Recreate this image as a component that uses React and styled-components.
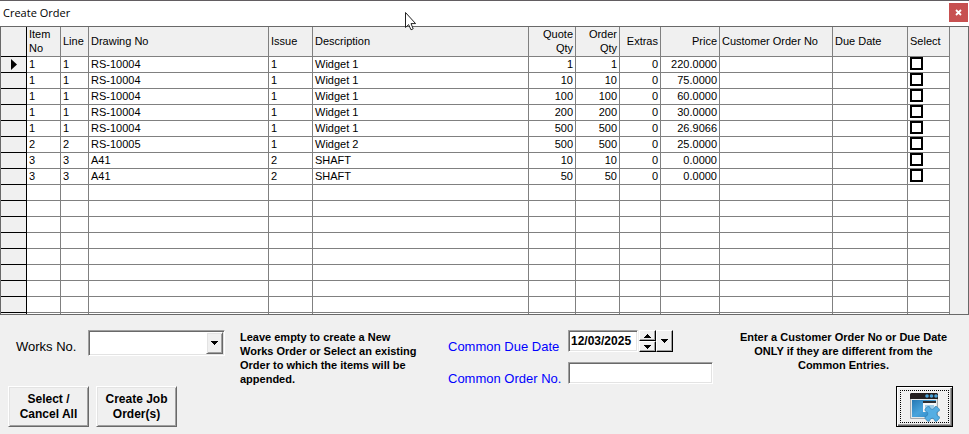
import React, { useState } from 'react';
import styled, { createGlobalStyle } from 'styled-components';

const GlobalStyle = createGlobalStyle`
  * {
    box-sizing: border-box;
  }
  body {
    margin: 0;
    background: #f0f0f0;
    color: #000;
    font-family: 'Liberation Sans', Arial, sans-serif;
    font-size: 11px;
  }
  button, input, select {
    margin: 0;
    padding: 0;
    color: inherit;
    font-family: inherit;
    border-radius: 0;
    outline: none;
  }
`;

const columns = [
  { key: 'item', label: 'Item No', width: 34 },
  { key: 'line', label: 'Line', width: 28 },
  { key: 'drawing', label: 'Drawing No', width: 180 },
  { key: 'issue', label: 'Issue', width: 44 },
  { key: 'description', label: 'Description' },
  { key: 'quoteQty', label: 'Quote Qty', width: 47, right: true },
  { key: 'orderQty', label: 'Order Qty', width: 44, right: true },
  { key: 'extras', label: 'Extras', width: 41, right: true },
  { key: 'price', label: 'Price', width: 59, right: true },
  { key: 'customerOrder', label: 'Customer Order No', width: 113 },
  { key: 'dueDate', label: 'Due Date', width: 75 },
];

const makeRow = (item, line, drawing, issue, description, qty, price) => ({
  item, line, drawing, issue, description, quoteQty: qty, orderQty: qty, extras: 0, price,
});

const orderRows = [
  makeRow(1, 1, 'RS-10004', 1, 'Widget 1', 1, '220.0000'),
  makeRow(1, 1, 'RS-10004', 1, 'Widget 1', 10, '75.0000'),
  makeRow(1, 1, 'RS-10004', 1, 'Widget 1', 100, '60.0000'),
  makeRow(1, 1, 'RS-10004', 1, 'Widget 1', 200, '30.0000'),
  makeRow(1, 1, 'RS-10004', 1, 'Widget 1', 500, '26.9066'),
  makeRow(2, 2, 'RS-10005', 1, 'Widget 2', 500, '25.0000'),
  makeRow(3, 3, 'A41', 2, 'SHAFT', 10, '0.0000'),
  makeRow(3, 3, 'A41', 2, 'SHAFT', 50, '0.0000'),
];

const emptyRows = Array.from({ length: 8 }, (_, i) => i);

const App = () => {
  const [selected, setSelected] = useState(orderRows.map(() => false));
  const [dueDate, setDueDate] = useState('12/03/2025');
  const [orderNo, setOrderNo] = useState('');

  const toggle = (index) => setSelected(selected.map((s, i) => (i === index ? !s : s)));
  const toggleAll = () => {
    const all = selected.every(Boolean);
    setSelected(selected.map(() => !all));
  };

  return (
    <Window>
      <GlobalStyle />
      <TitleBar>
        <Title>Create Order</Title>
        <CloseButton type="button" aria-label="Close">
          <svg width="7" height="7" viewBox="0 0 7 7">
            <path d="M1 1 L6 6 M6 1 L1 6" stroke="#fff" strokeWidth="1.8" />
          </svg>
        </CloseButton>
      </TitleBar>

      <GridFrame>
        <Table>
          <colgroup>
            <Col $width={26} />
            {columns.map((c) => <Col key={c.key} $width={c.width} />)}
            <Col $width={42} />
          </colgroup>
          <thead>
            <tr>
              <Marker as="th" />
              {columns.map((c) => (
                <HeadCell key={c.key} $right={c.right}>{c.label}</HeadCell>
              ))}
              <HeadCell>Select</HeadCell>
            </tr>
          </thead>
          <tbody>
            {orderRows.map((row, i) => (
              <tr key={i}>
                <Marker>
                  {i === 0 && (
                    <svg width="6" height="11" viewBox="0 0 6 11">
                      <path d="M0 0 L6 5.5 L0 11 Z" />
                    </svg>
                  )}
                </Marker>
                {columns.map((c) => (
                  <Cell key={c.key} $right={c.right}>{row[c.key]}</Cell>
                ))}
                <CheckCell>
                  <Check
                    type="checkbox"
                    aria-label={`Select row ${i + 1}`}
                    checked={selected[i]}
                    onChange={() => toggle(i)}
                  />
                </CheckCell>
              </tr>
            ))}
            {emptyRows.map((i) => (
              <tr key={i}>
                <Marker />
                {columns.map((c) => <Cell key={c.key} />)}
                <Cell />
              </tr>
            ))}
            <tr>
              <Marker $stub />
              {columns.map((c) => <Cell key={c.key} $stub />)}
              <Cell $stub />
            </tr>
          </tbody>
        </Table>
      </GridFrame>

      <Footer>
        <Stack>
          <Field $label={80} $indent>
            <Label htmlFor="works">Works No.</Label>
            <SelectBox>
              <Select id="works"><option value="" /></Select>
              <SelectArrow><Arrow /></SelectArrow>
            </SelectBox>
          </Field>
          <Buttons>
            <ActionButton type="button" onClick={toggleAll}>Select /<br />Cancel All</ActionButton>
            <ActionButton type="button">Create Job<br />Order(s)</ActionButton>
          </Buttons>
        </Stack>

        <Hint>
          Leave empty to create a New<br />
          Works Order or Select an existing<br />
          Order to which the items will be<br />
          appended.
        </Hint>

        <Form>
          <Field $label={120} $blue>
            <Label htmlFor="due">Common Due Date</Label>
            <DateBox>
              <DateInput id="due" value={dueDate} onChange={(e) => setDueDate(e.target.value)} />
              <Spinner>
                <SmallButton type="button" aria-label="Next day"><Arrow up /></SmallButton>
                <SmallButton type="button" aria-label="Previous day"><Arrow /></SmallButton>
              </Spinner>
              <SmallButton type="button" aria-label="Open calendar"><Arrow /></SmallButton>
            </DateBox>
          </Field>
          <Field $label={120} $blue>
            <Label htmlFor="order">Common Order No.</Label>
            <TextInput id="order" value={orderNo} onChange={(e) => setOrderNo(e.target.value)} />
          </Field>
        </Form>

        <Stack>
          <Hint $center>
            Enter a Customer Order No or Due Date<br />
            ONLY if they are different from the<br />
            Common Entries.
          </Hint>
          <ExitButton type="button" aria-label="Close form">
            <Dotted><ExitIcon /></Dotted>
          </ExitButton>
        </Stack>
      </Footer>

      <Pointer width="13" height="20" viewBox="0 0 13 20">
        <path
          d="M1.5 1.5 V16.5 L4.6 13.6 L7 18.8 L9.2 17.8 L7 12.6 H11.6 Z"
          fill="#fff"
          stroke="#222"
        />
      </Pointer>
    </Window>
  );
};

const Arrow = ({ up }) => (
  <svg width="7" height="4" viewBox="0 0 7 4" shapeRendering="crispEdges">
    <path d={up ? 'M0 4 L3.5 0 L7 4 Z' : 'M0 0 L3.5 4 L7 0 Z'} />
  </svg>
);

const ExitIcon = () => (
  <svg width="31" height="30" viewBox="0 0 31 30">
    <defs>
      <linearGradient id="pane" x1="0" y1="0" x2="1" y2="1">
        <stop offset="0" stopColor="#2478b4" />
        <stop offset="0.5" stopColor="#49a4dc" />
        <stop offset="1" stopColor="#2b86c4" />
      </linearGradient>
    </defs>
    <path d="M1.5 5 H28.5 V26.5 H1.5 Z" fill="#e4e8ea" stroke="#a4a9ac" />
    <path d="M3 8 H27 V25 H3 Z" fill="url(#pane)" />
    <path d="M2 1 H28 L29 2 V7 H1 V2 Z" fill="#231f20" />
    <g fill="#4aa3d8">
      <circle cx="18" cy="4" r="1.8" />
      <circle cx="22.5" cy="4" r="1.8" />
      <circle cx="27" cy="4" r="1.8" />
    </g>
    <path d="M14 10 H27 V20 H14 Z" fill="#f4f6f7" />
    <path d="M14 9 H27 V11 H14 Z" fill="#2a2e33" />
    <path d="M16 13 H25 V18 H16 Z" fill="#9ccbe8" />
    <path
      d="M18.6 14.6 H20.4 Q21 17.4 23.2 17.4 Q25.4 17.4 26 14.6 H27.8 L30.4 17.2 V18.8 Q27.6 19.6 27.6 21.8 Q27.6 24 30.4 24.8 V26.4 L27.8 29.2 H26 Q25.4 26.2 23.2 26.2 Q21 26.2 20.4 29.2 H18.6 L16 26.4 V24.8 Q18.8 24 18.8 21.8 Q18.8 19.6 16 18.8 V17.2 Z"
      fill="#55aee3"
      stroke="#2f7fb3"
      strokeWidth="0.7"
      strokeLinejoin="round"
    />
  </svg>
);

const sunken = `
  border: 1px solid;
  border-color: #a0a0a0 #fff #fff #a0a0a0;
  box-shadow: inset 1px 1px #696969, inset -1px -1px #e3e3e3;
  background: #fff;
`;

const raised = `
  border: 1px solid;
  border-color: #fff #696969 #696969 #fff;
  box-shadow: inset 1px 1px #e3e3e3, inset -1px -1px #a0a0a0;
  background: #f0f0f0;
`;

const Window = styled.main`
  position: relative;
  border-top: 1px solid #625d61;
`;

const TitleBar = styled.header`
  display: flex;
  justify-content: space-between;
  height: 25px;
  padding: 2px 1px 0 3px;
  background: #fff;
`;

const Title = styled.h1`
  margin: 0;
  font-family: 'Open Sans', 'Noto Sans', sans-serif;
  font-size: 11px;
  font-weight: 400;
  line-height: 20px;
`;

const CloseButton = styled.button`
  display: flex;
  align-items: center;
  justify-content: center;
  width: 19px;
  height: 19px;
  border: 0;
  background: #c75050;
`;

const GridFrame = styled.section`
  padding-right: 18px;
  border: 1px solid #696969;
`;

const Table = styled.table`
  width: 100%;
  table-layout: fixed;
  border-collapse: separate;
  border-spacing: 0;
`;

const Col = styled.col`
  width: ${(props) => (props.$width ? `${props.$width}px` : 'auto')};
`;

const Cell = styled.td`
  height: ${(props) => (props.$stub ? '1px' : '16px')};
  padding: 0 2px;
  border-right: 1px solid #808080;
  border-bottom: ${(props) => (props.$stub ? '0' : '1px solid #808080')};
  background: #fff;
  line-height: 15px;
  text-align: ${(props) => (props.$right ? 'right' : 'left')};
  white-space: nowrap;
`;

const HeadCell = styled(Cell).attrs({ as: 'th' })`
  height: 30px;
  padding-bottom: 1px;
  background: #f0f0f0;
  font-weight: 400;
  line-height: 14px;
  white-space: normal;
`;

const Marker = styled(Cell)`
  padding: 0 0 0 10px;
  border-color: #000;
  background: #f0f0f0;

  svg {
    display: block;
  }
`;

const CheckCell = styled(Cell)`
  vertical-align: top;
`;

const Check = styled.input`
  display: block;
  appearance: none;
  width: 13px;
  height: 13px;
  border: 2px solid #000;
  background: #fff;

  &:checked {
    background: #000;
    box-shadow: inset 0 0 0 2px #fff;
  }
`;

const Footer = styled.footer`
  display: grid;
  grid-template-columns: 217px 192px 272px minmax(217px, 1fr);
  column-gap: 15px;
  padding: 15px 16px 7px 8px;
`;

const Stack = styled.div`
  display: flex;
  flex-direction: column;
  justify-content: space-between;
  min-height: 97px;
`;

const Form = styled.div`
  display: flex;
  flex-direction: column;
  gap: 7px;
  padding-left: 1px;
`;

const Field = styled.div`
  display: grid;
  grid-template-columns: ${(props) => props.$label}px auto;
  align-items: start;
  justify-content: start;
  color: ${(props) => (props.$blue ? '#0000ff' : '#000')};

  label {
    padding-left: ${(props) => (props.$indent ? '8px' : '0')};
  }
`;

const Label = styled.label`
  padding-top: 9px;
  font-size: 13px;
  line-height: 16px;
  white-space: nowrap;
`;

const SelectBox = styled.div`
  position: relative;
  width: 137px;
  height: 26px;
  padding: 2px;
  ${sunken}
`;

const Select = styled.select`
  display: block;
  appearance: none;
  width: 100%;
  height: 100%;
  border: 0;
  background: transparent;
  font-size: 13px;
`;

const SelectArrow = styled.span`
  position: absolute;
  top: 1px;
  right: 1px;
  bottom: 1px;
  display: flex;
  align-items: center;
  justify-content: center;
  width: 17px;
  pointer-events: none;
  ${raised}
`;

const Buttons = styled.div`
  display: flex;
  gap: 7px;
`;

const ActionButton = styled.button`
  width: 81px;
  height: 41px;
  font-size: 12px;
  font-weight: 700;
  line-height: 15px;
  ${raised}
`;

const Hint = styled.p`
  margin: 0;
  font-weight: 700;
  line-height: 14px;
  text-align: ${(props) => (props.$center ? 'center' : 'left')};
  white-space: nowrap;
`;

const DateBox = styled.div`
  display: flex;
  height: 22px;
  color: #000;
`;

const DateInput = styled.input`
  width: 70px;
  height: 22px;
  margin-right: 1px;
  padding-left: 2px;
  font-size: 12px;
  font-weight: 700;
  ${sunken}
`;

const TextInput = styled.input`
  width: 145px;
  height: 22px;
  padding: 0 3px;
  font-size: 12px;
  ${sunken}
`;

const Spinner = styled.div`
  display: flex;
  flex-direction: column;
`;

const SmallButton = styled.button`
  display: flex;
  flex: 1;
  align-items: center;
  justify-content: center;
  width: 17px;
  min-width: 17px;
  border: 1px solid;
  border-color: #fff #000 #000 #fff;
  box-shadow: inset -1px -1px #a0a0a0;
  background: #f0f0f0;
`;

const ExitButton = styled.button`
  align-self: flex-end;
  width: 57px;
  height: 41px;
  padding: 3px;
  border: 1px solid #000;
  box-shadow: inset 1px 1px #fff, inset -1px -1px #696969, inset -2px -2px #a0a0a0;
  background: #f0f0f0;
`;

const Dotted = styled.span`
  display: flex;
  align-items: center;
  justify-content: center;
  height: 100%;
  border: 1px dotted #000;
`;

const Pointer = styled.svg`
  position: absolute;
  top: 10px;
  left: 404px;
  pointer-events: none;
`;

export default App;
